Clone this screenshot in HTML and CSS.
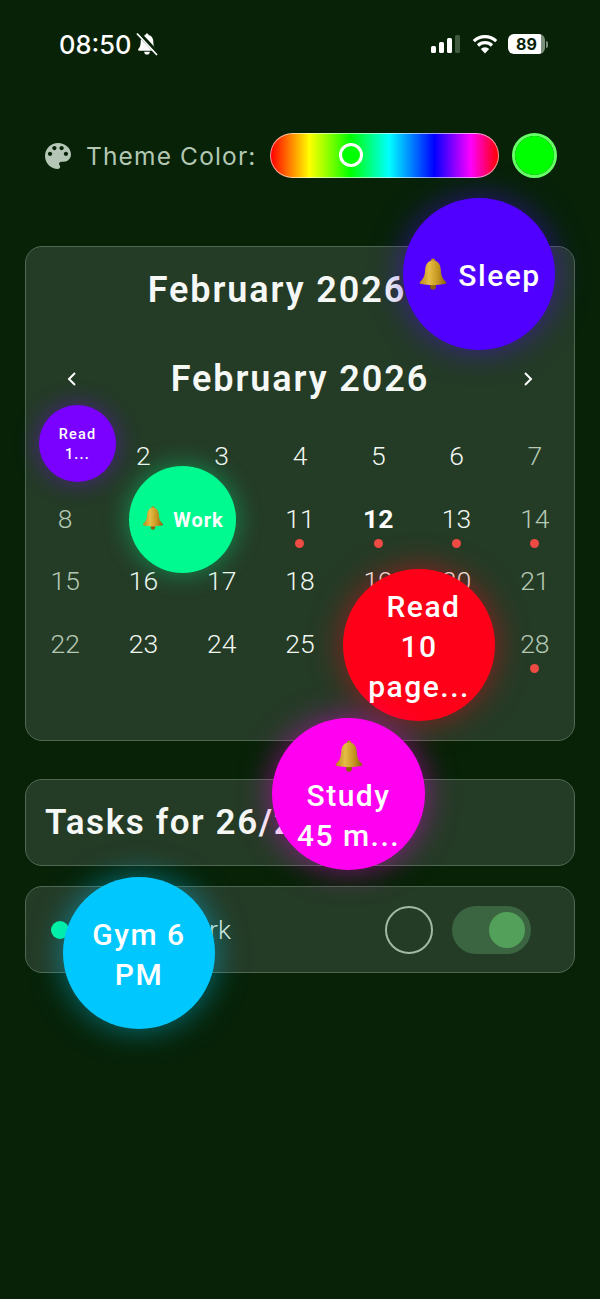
FILE: index.html
```html
<!DOCTYPE html>
<html>
  <head>
    <meta charset="UTF-8" />
    <title>Calendar Tasks</title>
    <link rel="stylesheet" href="styles.css">
  </head>
  <body>
  <div class="screen">

    <!-- Shared bell, used inside the bubbles -->
    <svg class="defs" width="0" height="0">
      <defs>
        <linearGradient id="gold" x1="0" y1="0" x2="1" y2="0">
          <stop offset="0" stop-color="#b9851a" />
          <stop offset="0.35" stop-color="#e6bd45" />
          <stop offset="0.7" stop-color="#c3941f" />
          <stop offset="1" stop-color="#86600f" />
        </linearGradient>
        <symbol id="bell" viewBox="0 0 24 26">
          <circle cx="12" cy="23.400" r="2.400" fill="#8a5f10" />
          <circle cx="12" cy="2.200" r="1.800" fill="#b98a20" />
          <path d="M12 2c-4.400 0-6.200 3.600-6.400 8-.2 4.200-1.200 6.600-4.100 9.200-.6.6-.3 1.800.8 2 6.400 1.200 13 1.200 19.400 0 1.100-.2 1.400-1.400.8-2-2.900-2.600-3.900-5-4.100-9.200C18.200 5.600 16.400 2 12 2z" fill="url(#gold)" />
        </symbol>
      </defs>
    </svg>

    <div class="status-bar">
      <div class="status-left">
        <span class="time">08:50</span>
        <svg class="muted" viewBox="0 0 24 24">
          <path d="M12 1.500c-.9 0-1.500.6-1.500 1.400-3.100.7-4.800 3.300-4.800 6.600 0 3.800-.8 6-2.400 7.600-.5.600-.2 1.600.8 1.600h15.800c1 0 1.300-1 .8-1.600-1.600-1.600-2.400-3.800-2.400-7.600 0-3.300-1.700-5.900-4.800-6.600 0-.8-.6-1.400-1.500-1.400z" fill="#fff" />
          <path d="M9.200 19.800a2.800 2.800 0 0 0 5.600 0z" fill="#fff" />
          <path d="M3 0.500l19.500 21" stroke="#072207" stroke-width="4.500" />
          <path d="M2 1.500l20 21.500" stroke="#fff" stroke-width="1.800" />
        </svg>
      </div>
      <div class="status-right">
        <div class="signal">
          <span class="bar bar-1"></span>
          <span class="bar bar-2"></span>
          <span class="bar bar-3"></span>
          <span class="bar bar-4"></span>
        </div>
        <svg class="wifi" viewBox="0 0 26 20">
          <path d="M1.800 7.200a16.200 16.200 0 0 1 22.400 0" />
          <path d="M6 11.500a10.200 10.200 0 0 1 14 0" />
          <path class="wifi-tip" d="M13 19.500l-4.200-4.600a6 6 0 0 1 8.400 0z" />
        </svg>
        <div class="battery">
          <div class="battery-body">89</div>
          <span class="battery-nub"></span>
        </div>
      </div>
    </div>

    <div class="theme-row">
      <svg class="palette" viewBox="3 3 18 18">
        <path d="M12 3c-4.970 0-9 4.030-9 9s4.030 9 9 9c.83 0 1.500-.67 1.500-1.500 0-.39-.15-.74-.39-1.010-.23-.26-.38-.61-.38-.99 0-.83.67-1.500 1.500-1.500H16c2.760 0 5-2.240 5-5 0-4.420-4.030-8-9-8zm-5.500 9c-.83 0-1.500-.67-1.500-1.500S5.670 9 6.500 9 8 9.670 8 10.500 7.330 12 6.500 12zm3-4C8.670 8 8 7.330 8 6.500S8.670 5 9.500 5s1.500.67 1.500 1.500S10.330 8 9.500 8zm5 0c-.83 0-1.500-.67-1.500-1.500S13.670 5 14.500 5s1.500.67 1.500 1.500S15.330 8 14.500 8zm3 4c-.83 0-1.500-.67-1.500-1.500S16.670 9 17.500 9s1.500.67 1.500 1.500-.67 1.500-1.500 1.500z" />
      </svg>
      <span class="theme-label">Theme Color:</span>
      <div class="hue-slider">
        <span class="hue-thumb"></span>
      </div>
      <span class="swatch"></span>
    </div>

    <div class="card calendar">
      <h2 class="calendar-title">February 2026</h2>
      <div class="month-nav">
        <svg class="chevron" viewBox="0 0 12 18"><path d="M9 3L3 9l6 6" /></svg>
        <span class="month-name">February 2026</span>
        <svg class="chevron" viewBox="0 0 12 18"><path d="M3 3l6 6-6 6" /></svg>
      </div>
      <div class="days">
        <div class="day weekend">1</div>
        <div class="day">2</div>
        <div class="day">3</div>
        <div class="day">4</div>
        <div class="day">5</div>
        <div class="day">6</div>
        <div class="day weekend">7</div>
        <div class="day weekend">8</div>
        <div class="day">9</div>
        <div class="day">10</div>
        <div class="day">11<span class="dot"></span></div>
        <div class="day today">12<span class="dot"></span></div>
        <div class="day">13<span class="dot"></span></div>
        <div class="day weekend">14<span class="dot"></span></div>
        <div class="day weekend">15</div>
        <div class="day">16</div>
        <div class="day">17</div>
        <div class="day">18</div>
        <div class="day">19</div>
        <div class="day">20</div>
        <div class="day weekend">21</div>
        <div class="day weekend">22</div>
        <div class="day">23</div>
        <div class="day">24</div>
        <div class="day">25</div>
        <div class="day">26</div>
        <div class="day">27</div>
        <div class="day weekend">28<span class="dot"></span></div>
      </div>
    </div>

    <div class="card tasks-header">
      <h2 class="tasks-title">Tasks for 26/2/2026</h2>
    </div>

    <div class="card task">
      <span class="task-dot"></span>
      <span class="task-name">Evening work</span>
      <span class="task-check"></span>
      <div class="toggle"><span class="toggle-knob"></span></div>
    </div>

    <!-- Floating bubbles sit over everything else -->
    <div class="bubble bubble-sleep"><svg class="bell"><use href="#bell" /></svg>&nbsp;Sleep</div>
    <div class="bubble bubble-read-small">Read<br>1...</div>
    <div class="bubble bubble-work"><svg class="bell"><use href="#bell" /></svg>&nbsp;Work</div>
    <div class="bubble bubble-read">&nbsp;Read<br>10<br>page...</div>
    <div class="bubble bubble-study"><svg class="bell"><use href="#bell" /></svg><br>Study<br>45 m...</div>
    <div class="bubble bubble-gym">Gym 6<br>PM</div>

  </div>
  </body>
</html>
```

FILE: styles.css
```css
body {
  margin: 0;
  background: #072207;
  font-family: "Roboto", "Liberation Sans", sans-serif;
  color: #FFFFFF;
}

h2 {
  margin: 0;
}

.screen {
  position: relative;
  width: 600px;
  height: 1299px;
  padding: 0 25px;
  box-sizing: border-box;
  overflow: hidden;
}

.defs {
  position: absolute;
}

/* Status bar */
.status-bar {
  height: 88px;
  display: flex;
  justify-content: space-between;
  align-items: center;
}

.status-left {
  display: flex;
  align-items: center;
  gap: 4px;
  margin-left: 34px;
}

.time {
  font-family: "Inter", sans-serif;
  font-size: 25.500px;
  font-weight: 500;
}

.muted {
  width: 24px;
  height: 24px;
}

.status-right {
  display: flex;
  align-items: center;
  margin-right: 27px;
}

.signal {
  display: flex;
  align-items: flex-end;
  gap: 3px;
  height: 18px;
}

.bar {
  width: 5px;
  background: #FFFFFF;
  border-radius: 1.500px;
}

.bar-1 { height: 7px; }
.bar-2 { height: 11px; }
.bar-3 { height: 15px; }
.bar-4 { height: 18px; background: #3f5a3f; }

.wifi {
  width: 26px;
  height: 20px;
  margin-left: 12px;
  fill: none;
  stroke: #FFFFFF;
  stroke-width: 3.200;
}

.wifi-tip {
  fill: #FFFFFF;
  stroke: none;
}

.battery {
  display: flex;
  align-items: center;
  margin-left: 10px;
}

.battery-body {
  width: 37px;
  height: 20px;
  border-radius: 6px;
  background: linear-gradient(90deg, #FFFFFF 89%, #7d8f7d 89%);
  color: #072207;
  font-family: "Inter", sans-serif;
  font-size: 16px;
  font-weight: 700;
  line-height: 20px;
  text-align: center;
}

.battery-nub {
  width: 2px;
  height: 7px;
  margin-left: 1px;
  background: #7d8f7d;
  border-radius: 0 2px 2px 0;
}

/* Theme colour row */
.theme-row {
  height: 45px;
  margin-top: 45px;
  display: flex;
  align-items: center;
  padding-left: 20px;
}

.palette {
  width: 26px;
  height: 26px;
  fill: #b6c6b6;
}

.theme-label {
  width: 171px;
  margin-left: 15px;
  font-family: "Inter", sans-serif;
  font-size: 24.500px;
  letter-spacing: 1.150px;
  color: #b3c7b3;
  white-space: nowrap;
}

.hue-slider {
  position: relative;
  width: 229px;
  height: 45px;
  margin-left: 13px;
  flex-shrink: 0;
  box-sizing: border-box;
  border: 1.500px solid rgba(255, 255, 255, 0.6);
  border-radius: 23px;
  background: linear-gradient(90deg, #FF0000 0%, #FFFF00 17%, #00FF00 35%, #00FFFF 52%, #0000FF 72%, #FF00FF 88%, #FF0000 100%);
}

.hue-thumb {
  position: absolute;
  left: 68px;
  top: 9px;
  width: 24px;
  height: 24px;
  box-sizing: border-box;
  border: 3px solid #FFFFFF;
  border-radius: 50%;
  background: #00FF00;
}

.swatch {
  width: 45px;
  height: 45px;
  margin-left: 13px;
  flex-shrink: 0;
  box-sizing: border-box;
  border: 3px solid #66ff66;
  border-radius: 50%;
  background: #00FF00;
  background-clip: padding-box;
}

/* Cards */
.card {
  box-sizing: border-box;
  background: #243b26;
  border: 1.500px solid #506852;
  border-radius: 17px;
}

.calendar {
  height: 495px;
  margin-top: 68px;
}

.calendar-title {
  margin-top: 19px;
  padding-right: 46px;
  font-size: 36px;
  font-weight: 600;
  line-height: 48px;
  letter-spacing: 1.900px;
  text-align: center;
  color: #F5F8F5;
}

.month-nav {
  display: flex;
  justify-content: space-between;
  align-items: center;
  height: 48px;
  margin-top: 41px;
  padding: 0 40px;
}

.month-name {
  font-size: 36px;
  font-weight: 600;
  letter-spacing: 1.900px;
  color: #F5F8F5;
}

.chevron {
  width: 12px;
  height: 18px;
  fill: none;
  stroke: #FFFFFF;
  stroke-width: 2;
}

.days {
  display: grid;
  grid-template-columns: repeat(7, 1fr);
  grid-auto-rows: 62.500px;
  margin-top: 33px;
}

.day {
  display: flex;
  flex-direction: column;
  align-items: center;
  font-size: 26.500px;
  font-weight: 300;
  line-height: 40px;
  color: #F2F7F2;
}

.weekend {
  color: #b4c9b4;
}

.today {
  font-weight: 700;
  color: #FFFFFF;
}

.dot {
  width: 9px;
  height: 9px;
  border-radius: 50%;
  background: #EF4B45;
}

.tasks-header {
  height: 87px;
  margin-top: 38px;
  display: flex;
  align-items: center;
  padding-left: 19px;
}

.tasks-title {
  font-size: 35px;
  font-weight: 600;
  letter-spacing: 1.600px;
  color: #F5F8F5;
  white-space: nowrap;
}

.task {
  height: 87px;
  margin-top: 20px;
  display: flex;
  align-items: center;
  padding: 0 43px 0 25px;
}

.task-dot {
  width: 18px;
  height: 18px;
  border-radius: 50%;
  background: #00F59B;
}

.task-name {
  flex: 1;
  margin-left: 8px;
  font-size: 26.500px;
  font-weight: 300;
  color: #dfe9df;
  white-space: nowrap;
}

.task-check {
  width: 48px;
  height: 48px;
  box-sizing: border-box;
  border: 2.500px solid #a3b8a3;
  border-radius: 50%;
}

.toggle {
  width: 79px;
  height: 48px;
  margin-left: 19px;
  display: flex;
  align-items: center;
  justify-content: flex-end;
  padding-right: 6px;
  box-sizing: border-box;
  border-radius: 24px;
  background: #3b6540;
}

.toggle-knob {
  width: 36px;
  height: 36px;
  border-radius: 50%;
  background: #52a05a;
}

/* Bubbles */
.bubble {
  position: absolute;
  box-sizing: border-box;
  padding-top: 4px;
  align-content: center;
  border-radius: 50%;
  text-align: center;
  font-size: 30px;
  font-weight: 500;
  line-height: 40px;
  letter-spacing: 1.500px;
  color: #FFFFFF;
}

.bell {
  width: 32px;
  height: 32px;
  vertical-align: -4px;
}

.bubble-sleep {
  left: 403px;
  top: 198px;
  width: 152px;
  height: 152px;
  background: #5000FF;
  box-shadow: 0 0 32px rgba(80, 0, 255, 0.5);
}

.bubble-read-small {
  left: 39px;
  top: 405px;
  width: 77px;
  height: 77px;
  padding-top: 2px;
  font-size: 14.500px;
  line-height: 20px;
  letter-spacing: 1.200px;
  background: #7A00FF;
  box-shadow: 0 0 24px rgba(122, 0, 255, 0.45);
}

.bubble-work {
  left: 129px;
  top: 466px;
  width: 107px;
  height: 107px;
  padding: 0;
  font-size: 20px;
  font-weight: 700;
  line-height: 26px;
  letter-spacing: 1px;
  background: #00FA8F;
  box-shadow: 0 0 26px rgba(0, 250, 143, 0.45);
}

.bubble-work .bell {
  width: 24px;
  height: 24px;
  margin-right: 2px;
  vertical-align: -3px;
}

.bubble-read {
  left: 343px;
  top: 569px;
  width: 152px;
  height: 152px;
  background: #FF0019;
  box-shadow: 0 0 32px rgba(255, 0, 25, 0.5);
}

.bubble-study {
  left: 272px;
  top: 718px;
  width: 153px;
  height: 152px;
  background: #FF00F0;
  box-shadow: 0 0 32px rgba(255, 0, 240, 0.5);
}

.bubble-study .bell {
  vertical-align: -6px;
}

.bubble-gym {
  left: 63px;
  top: 877px;
  width: 152px;
  height: 152px;
  background: #00C8FF;
  box-shadow: 0 0 32px rgba(0, 200, 255, 0.5);
}
```
